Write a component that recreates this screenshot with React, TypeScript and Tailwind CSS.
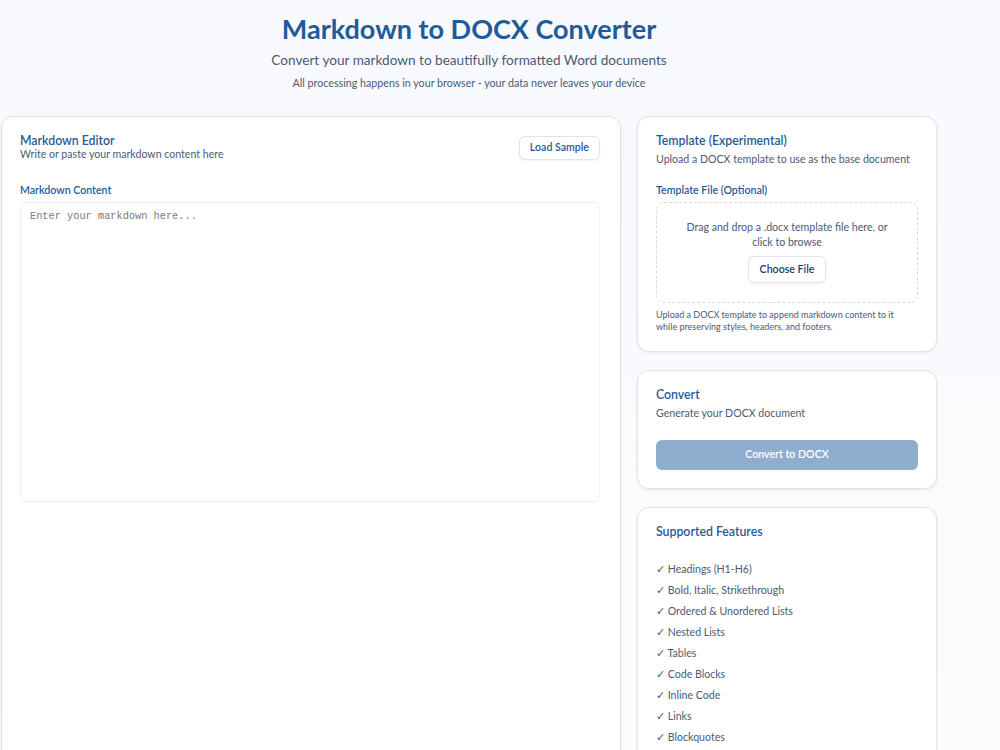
import React from 'react';

const features = [
    'Headings (H1-H6)',
    'Bold, Italic, Strikethrough',
    'Ordered & Unordered Lists',
    'Nested Lists',
    'Tables',
    'Code Blocks',
    'Inline Code',
    'Links',
    'Blockquotes',
];

const Card = ({ children, className = '' }: { children: React.ReactNode; className?: string }) => (
    <div className={`bg-white rounded-xl border border-[#dfe3ea] shadow-[0_1px_3px_rgba(15,23,42,0.08)] ${className}`}>
        {children}
    </div>
);

export default function App() {
    return (
        <div className="h-[750px] overflow-hidden bg-gradient-to-b from-[#f7f9fc] to-[#fbfcfe] font-['Lato',sans-serif]">
            <div className="w-[938px]">
                {/* Header */}
                <header className="text-center pt-[11px] pb-[25px]">
                    <h1 className="text-[27px] font-bold text-[#1f5b9b] leading-[36px]">Markdown to DOCX Converter</h1>
                    <p className="text-[13.6px] text-[#4c5a75] mt-[3px] leading-5">Convert your markdown to beautifully formatted Word documents</p>
                    <p className="text-[10.7px] text-[#4c5a75] mt-[5px] leading-4">All processing happens in your browser - your data never leaves your device</p>
                </header>

                <div className="grid grid-cols-[620px_300px] gap-4 pl-px">
                    {/* Editor */}
                    <Card className="pl-[18px] pr-[20px] pt-[15px] h-[700px]">
                        <div className="flex items-start justify-between">
                            <div>
                                <h2 className="text-[12.3px] font-semibold text-[#1f5b9b] leading-[15px] mt-px">Markdown Editor</h2>
                                <p className="text-[10.6px] text-[#4c5a75] leading-[13px]">Write or paste your markdown content here</p>
                            </div>
                            <button className="mt-[4px] h-[24px] px-[10px] rounded-md border border-[#dfe3ea] bg-white text-[10.6px] font-semibold text-[#1f5b9b] shadow-[0_1px_2px_rgba(15,23,42,0.05)]">
                                Load Sample
                            </button>
                        </div>
                        <label className="block text-[10.6px] font-semibold text-[#1f5b9b] mt-[21px] leading-4">Markdown Content</label>
                        <textarea
                            placeholder="Enter your markdown here..."
                            className="block mt-[4px] w-full h-[300px] resize-none rounded-md border border-[#eceff3] px-[9px] py-[6px] text-[10.3px] leading-[14px] font-['Liberation_Mono',monospace] text-[#333] placeholder:text-[#7a7a7a] outline-none"
                        />
                    </Card>

                    {/* Right column */}
                    <div className="flex flex-col gap-[18px]">
                        <Card className="px-[18px] pt-[16px] pb-[18px]">
                            <h2 className="text-[12.3px] font-semibold text-[#1f5b9b] leading-4">Template (Experimental)</h2>
                            <p className="text-[10.6px] text-[#4c5a75] mt-[2px] leading-4">Upload a DOCX template to use as the base document</p>
                            <p className="text-[10.6px] font-semibold text-[#1f5b9b] mt-[15px] leading-4">Template File (Optional)</p>
                            <div className="mt-[4px] h-[101px] rounded-lg border border-dashed border-[#d6dbe3] flex flex-col items-center pt-[17px] px-6">
                                <p className="text-[10.6px] text-[#4c5a75] text-center leading-[15px]">Drag and drop a .docx template file here, or click to browse</p>
                                <button className="mt-[6px] h-[27px] px-[11px] rounded-md border border-[#dfe3ea] bg-white text-[10.6px] font-semibold text-[#1f3f66] shadow-[0_1px_2px_rgba(15,23,42,0.06)]">
                                    Choose File
                                </button>
                            </div>
                            <p className="text-[9px] text-[#4c5a75] mt-[6px] leading-[12px] pr-5">
                                Upload a DOCX template to append markdown content to it while preserving styles, headers, and footers.
                            </p>
                        </Card>

                        <Card className="px-[18px] pt-[16px] pb-[18px]">
                            <h2 className="text-[12.3px] font-semibold text-[#1f5b9b] leading-4">Convert</h2>
                            <p className="text-[10.6px] text-[#4c5a75] mt-[2px] leading-4">Generate your DOCX document</p>
                            <button disabled className="mt-[19px] w-full h-[30px] rounded-md bg-[#8faecf] text-white text-[10.6px] font-semibold">
                                Convert to DOCX
                            </button>
                        </Card>

                        <Card className="px-[18px] pt-[16px] pb-6">
                            <h2 className="text-[12.3px] font-semibold text-[#1f5b9b] leading-4">Supported Features</h2>
                            <ul className="mt-[21px] flex flex-col gap-[5px]">
                                {features.map((f) => (
                                    <li key={f} className="text-[10.6px] text-[#4c5a75] leading-4">✓ {f}</li>
                                ))}
                            </ul>
                        </Card>
                    </div>
                </div>
            </div>
        </div>
    );
}
